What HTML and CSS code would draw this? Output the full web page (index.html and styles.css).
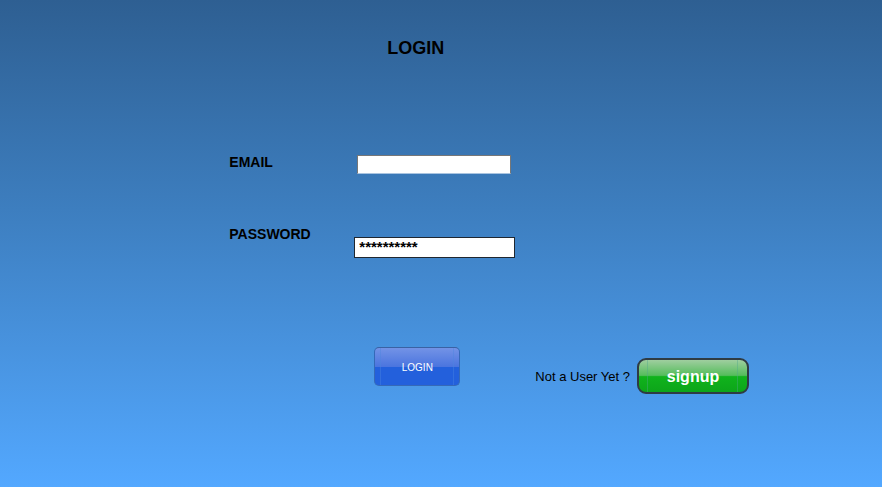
FILE: index.html
```html
<!DOCTYPE html>
<html lang="en">
<head>
<meta charset="utf-8">
<title>Login</title>
<link rel="stylesheet" href="styles.css">
</head>
<body>
<main class="page">
  <h1 class="title">LOGIN</h1>
  <form class="login">
    <div class="row row-email">
      <label for="email">EMAIL</label>
      <input class="field email" id="email" type="text">
    </div>
    <div class="row row-password">
      <label for="password">PASSWORD</label>
      <input class="field password" id="password" type="text" value="**********">
    </div>
    <div class="actions">
      <button class="button login-button" type="submit">LOGIN</button>
      <div class="register">
        <span>Not a User Yet ?</span>
        <button class="button signup-button" type="button">signup</button>
      </div>
    </div>
  </form>
</main>
</body>
</html>
```
FILE: styles.css
```css
* {
  box-sizing: border-box;
}

body {
  margin: 0;
  min-height: 100vh;
  background: linear-gradient(#2e5f92 0%, #3d7ebf 43%, #53a8ff 100%);
  font-family: "Liberation Sans", Arial, sans-serif;
  color: #000;
}

.page {
  padding: 37px 0 0 26%;
}

.title {
  margin: 0 0 95px 158px;
  font-size: 18px;
  line-height: 22px;
}

.row {
  display: grid;
  grid-template-columns: 125px 162px;
  align-items: start;
  font-size: 14px;
  font-weight: bold;
  line-height: 16px;
}

.row-email {
  margin-bottom: 52px;
}

.row-password {
  margin-bottom: 89px;
}

.field {
  margin: 0;
  background: #fff;
  outline: none;
  color: #000;
  font: bold 15px "Liberation Sans", Arial, sans-serif;
}

.email {
  width: 154px;
  height: 19px;
  margin: 1px 0 0 3px;
  border: 1px solid #777;
  border-bottom-color: #a9c4e0;
}

.password {
  width: 161px;
  height: 21px;
  margin-top: 11px;
  padding: 0 4px 3px;
  border: 1px solid #1f2730;
}

.actions {
  display: flex;
  align-items: flex-start;
  gap: 75px;
  margin-left: 145px;
}

.button {
  padding: 2px 0 0;
  font-family: inherit;
  color: #fff;
}

/* Thin vertical seams run near both ends of each glossy button. */
.login-button {
  width: 86px;
  height: 39px;
  border: 1px solid #3569b8;
  border-top-color: #3a62a4;
  border-radius: 5px;
  background:
    linear-gradient(90deg, transparent 5px, #4b85df66 5px, #4b85df66 6px, transparent 6px, transparent 78px, #4b85df66 78px, #4b85df66 79px, transparent 79px),
    linear-gradient(#7393e6 0%, #4b75df 50%, #2360dc 52%, #2360dc 100%);
  font-size: 10px;
}

.register {
  display: flex;
  align-items: center;
  gap: 7px;
  margin-top: 11px;
  font-size: 13px;
}

.signup-button {
  width: 112px;
  height: 36px;
  border: 2px solid #2f3b43;
  border-radius: 9px;
  background:
    linear-gradient(90deg, transparent 8px, #4fa58c66 8px, #4fa58c66 9px, transparent 9px, transparent 98px, #4fa58c66 98px, #4fa58c66 99px, transparent 99px),
    linear-gradient(#9fce9f 0%, #55bd5c 48%, #10b31c 52%, #0da51a 100%);
  font-size: 16px;
  font-weight: bold;
}
```
